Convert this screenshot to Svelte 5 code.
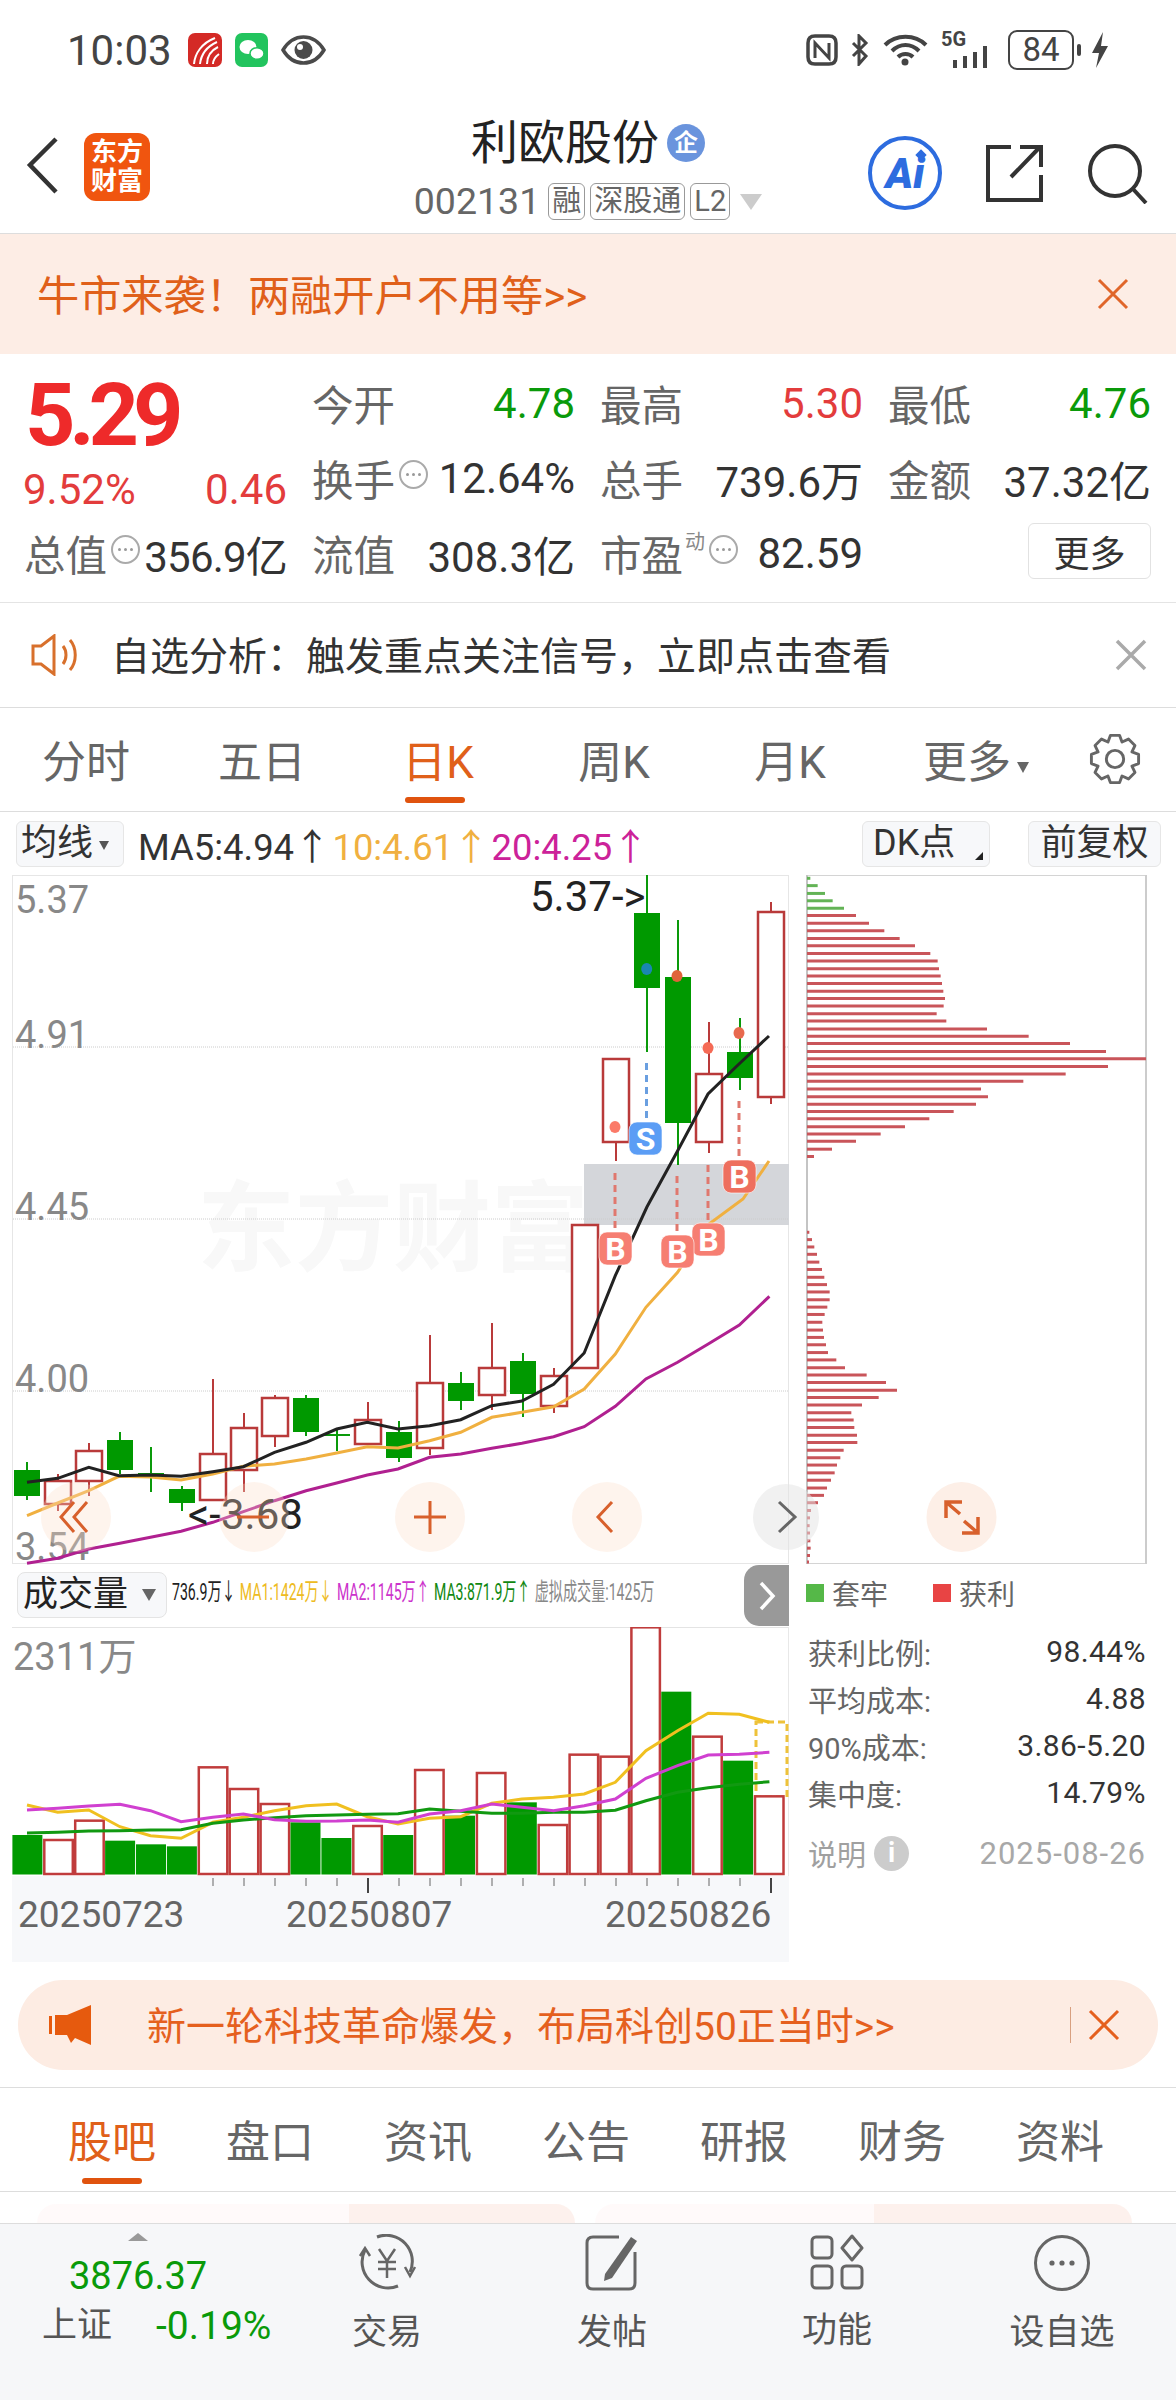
<script>
  const cx = (i) => 27 + 31 * i;
  const K = [
    ['g',1463,1471,1497,1501],['r',1475,1482,1505,1512],['r',1444,1452,1482,1497],['g',1433,1441,1471,1475],
    ['g',1448,1475,1475,1493],['g',1487,1490,1504,1512],['r',1380,1455,1501,1501],['r',1414,1429,1471,1493],
    ['r',1396,1399,1437,1448],['g',1396,1399,1433,1437],['g',1430,1436,1436,1452],['r',1403,1421,1445,1445],
    ['g',1422,1433,1459,1463],['r',1336,1384,1449,1456],['g',1373,1384,1402,1411],['r',1324,1369,1396,1411],
    ['g',1354,1362,1395,1418],['r',1369,1377,1407,1414],['r',1226,1226,1369,1369],['r',1060,1060,1143,1162],
    ['g',876,914,989,1053],['g',921,978,1124,1166],['r',1023,1075,1143,1154],['g',1019,1053,1079,1091],
    ['r',903,913,1098,1105]
  ];
  const toLine = (arr) => arr.map(([x, y]) => `${(x / 1.96).toFixed(1)},${(1200 + y / 3).toFixed(1)}`).join(' ');
  const ma5 = toLine([[53,850],[113,838],[174,805],[233,830],[295,828],[355,832],[417,818],[477,803],[538,760],[600,730],[660,690],[720,670],[780,690],[842,680],[903,662],[964,620],[1023,606],[1085,556],[1145,462],[1206,230],[1268,24]]) + ' 677,1153 708,1095 739,1065 769,1037';
  const ma10 = toLine([[53,950],[113,912],[174,875],[233,832],[295,834],[355,843],[417,825],[477,802],[538,795],[600,780],[660,762],[720,743],[780,747],[842,725],[903,700],[964,655],[1023,640],[1085,623],[1145,570],[1206,465],[1266,325],[1328,220]]) + ' 709,1225 743,1200 769,1162';
  const ma20 = toLine([[53,1093],[113,1078],[174,1050],[235,1033],[295,1015],[355,997],[417,970],[477,938],[538,905],[600,875],[660,852],[720,828],[780,810],[842,775],[903,765],[964,748],[1023,733],[1085,713],[1145,683],[1206,622],[1266,540],[1328,490],[1388,435],[1449,378],[1508,292]]);
  const V = [['g',828],['r',843],['r',785],['g',845],['g',856],['g',862],['r',625],['r',690],['r',735],['g',790],['g',837],['r',801],['g',828],['r',633],['g',770],['r',642],['g',730],['r',798],['r',587],['r',593],['r',205],['g',398],['r',533],['g',605],['r',712]];
  const vy = (z) => 1560 + z / 3;
  const vTop = V.map(([c, z], i) => ({ c, x: 12.4 + 30.9 * i, y: vy(z) }));
  const vx = [53,113,174,235,295,355,417,477,538,600,660,720,780,842,903,964,1023,1085,1145,1206,1266,1328,1388,1449,1508];
  const vLine = (ys) => ys.map((y, i) => `${(vx[i] / 1.96).toFixed(1)},${vy(y).toFixed(1)}`).join(' ');
  const m1 = vLine([738,760,753,803,830,838,790,775,755,740,735,773,795,778,773,733,720,715,705,670,575,515,463,466,490]);
  const m2 = vLine([753,748,741,736,755,788,775,765,782,787,786,783,790,765,755,735,745,755,740,720,658,620,588,586,580]);
  const m3 = vLine([822,820,816,815,813,812,793,783,776,770,768,766,764,750,757,763,763,760,760,754,725,700,686,676,668]);
  const chipsG = [[42,91],[58,113],[75,135],[91,158],[107,192]];
  const chipsR = [[123,228],[140,267],[156,313],[173,359],[189,405],[206,451],[222,473],[239,477],[255,482],[271,486],[288,490],[304,495],[320,491],[337,470],[353,499],[370,621],[386,746],[402,870],[419,978],[435,1098],[452,984],[468,857],[484,730],[501,603],[518,624],[534,588],[550,521],[566,448],[583,375],[599,302],[615,228],[632,156],[648,102],[813,88],[829,96],[845,103],[861,111],[878,118],[894,126],[911,133],[927,141],[943,149],[960,149],[976,142],[992,134],[1009,127],[1026,129],[1042,132],[1058,138],[1075,144],[1091,169],[1108,195],[1124,260],[1140,318],[1157,351],[1173,296],[1189,246],[1206,214],[1222,221],[1238,223],[1255,231],[1271,232],[1288,191],[1304,181],[1320,171],[1337,164],[1353,153],[1370,141],[1386,132],[1402,114],[1419,93],[1435,90],[1452,89],[1468,90],[1485,91],[1501,92],[1517,90],[1531,87]];
  const chipY = (z) => 860 + z / 2.178;
  const chipX = (v) => 780 + v / 3;
  const ticks = Array.from({ length: 18 }, (_, i) => 213 + 31 * i).filter((x) => x !== 368);
  const gear = (() => {
    let d = '';
    const n = 8, R = 25, r = 19;
    for (let k = 0; k < n; k++) {
      const a = (k * 360) / n - 90;
      const pts = [[-22.5, r], [-11, R], [11, R], [22.5, r]];
      pts.forEach(([da, rad], j) => {
        const t = ((a + da) * Math.PI) / 180;
        d += `${k === 0 && j === 0 ? 'M' : 'L'}${(rad * Math.cos(t)).toFixed(1)} ${(rad * Math.sin(t)).toFixed(1)} `;
      });
    }
    return d + 'Z';
  })();
  const quoteRows = [
    [['今开', '4.78', 'green'], ['最高', '5.30', 'red'], ['最低', '4.76', 'green']],
    [['换手', '12.64%', '', 'dots'], ['总手', '739.6万', ''], ['金额', '37.32亿', '']]
  ];
</script>

<div class="page">
  <div class="status">
    <div class="st-left">
      <span class="time">10:03</span>
      <svg class="sicon" width="34" height="34" viewBox="0 0 34 34"><rect width="34" height="34" rx="7" fill="#d42a26"/><path d="M6 31C7 20 14 10 27 5M12 31C13 22 18 14 29 9M19 31C19 24 22 18 30 14M25 31C25 27 27 24 31 21" stroke="#fff" stroke-width="2" fill="none"/></svg>
      <svg class="sicon" width="33" height="34" viewBox="0 0 33 34"><rect width="33" height="34" rx="7" fill="#22c45e"/><ellipse cx="13" cy="14" rx="8.500" ry="7" fill="#fff"/><ellipse cx="22" cy="20.500" rx="7" ry="5.800" fill="#fff" stroke="#22c45e" stroke-width="1.500"/></svg>
      <svg class="sicon" width="45" height="30" viewBox="0 0 45 30"><path d="M2 15C8 5 15 2 22.500 2S37 5 43 15C37 25 30 28 22.500 28S8 25 2 15Z" fill="none" stroke="#4a4a4a" stroke-width="3.500"/><circle cx="22.500" cy="15" r="9" fill="#4a4a4a"/><circle cx="19" cy="12" r="3" fill="#fff"/></svg>
    </div>
    <div class="st-right">
      <svg class="nfc" width="32" height="32" viewBox="0 0 32 32"><path d="M9 2H23Q30 2 30 9V23Q30 30 23 30H9Q2 30 2 23V9Q2 2 9 2Z" fill="none" stroke="#444" stroke-width="3.500"/><path d="M9 24V9L23 24V9" fill="none" stroke="#444" stroke-width="3"/></svg>
      <svg width="20" height="32" viewBox="0 0 20 32"><path d="M3 9L16 22L9 30V2L16 9L3 22" fill="none" stroke="#444" stroke-width="3"/></svg>
      <svg width="45" height="32" viewBox="0 0 45 32"><path d="M2 11C13 0 32 0 43 11M9 17C17 9 28 9 36 17M15 23C19 19 26 19 30 23" fill="none" stroke="#444" stroke-width="4"/><circle cx="22" cy="28" r="3.500" fill="#444"/></svg>
      <div class="sig"><span class="fg">5G</span><svg width="44" height="22" viewBox="0 0 44 22"><rect x="2" y="14" width="4" height="8" fill="#444"/><rect x="12" y="10" width="4" height="12" fill="#444"/><rect x="22" y="6" width="4" height="16" fill="#444"/><rect x="32" y="0" width="4" height="22" fill="#444"/></svg></div>
      <div class="batt">84</div>
      <svg class="bnub" width="4" height="12" viewBox="0 0 4 12"><rect width="4" height="12" rx="2" fill="#444"/></svg>
      <svg width="20" height="36" viewBox="0 0 20 36"><path d="M13 0L2 21H9L6 36L18 14H11Z" fill="#444"/></svg>
    </div>
  </div>

  <div class="nav">
    <svg class="back" width="36" height="60" viewBox="0 0 36 60"><path d="M32 4L6 30L32 57" fill="none" stroke="#333" stroke-width="4.500"/></svg>
    <div class="logo"><span>东方</span><span>财富</span></div>
    <div class="title">
      <div class="name">利欧股份<span class="qi">企</span></div>
      <div class="code">002131<span class="tg">融</span><span class="tg">深股通</span><span class="tg">L2</span><i class="tri"></i></div>
    </div>
    <div class="tools">
      <div class="ai"><b>Ai</b><i></i></div>
      <svg width="60" height="60" viewBox="0 0 60 60"><path d="M27 4H4V57H57V32M27 34L55 5M36 4H57V24" fill="none" stroke="#333" stroke-width="4"/></svg>
      <svg width="62" height="62" viewBox="0 0 62 62"><circle cx="29" cy="29" r="25" fill="none" stroke="#333" stroke-width="4"/><path d="M47 47L60 61" stroke="#333" stroke-width="4"/></svg>
    </div>
  </div>

  <div class="banner">
    <span class="up2">牛市来袭！两融开户不用等&gt;&gt;</span>
    <svg width="34" height="34" viewBox="0 0 34 34"><path d="M3 3L31 31M31 3L3 31" stroke="#e0662a" stroke-width="3"/></svg>
  </div>

  <div class="quote">
    <div class="q-price">
      <div class="price">5.29</div>
      <div class="chg"><span>9.52%</span><span>0.46</span></div>
    </div>
    {#each quoteRows as row, r}
      {#each row as c, i}
        <div class="cell" style="grid-row:{r + 1};grid-column:{i + 2}">
          <span class="lb">{c[0]}</span>
          {#if c[3]}<svg class="dots" width="31" height="31" viewBox="0 0 31 31"><circle cx="15.500" cy="15.500" r="13.500" fill="none" stroke="#aaa" stroke-width="2"/><circle cx="9.500" cy="15.500" r="1.500" fill="#999"/><circle cx="15.500" cy="15.500" r="1.500" fill="#999"/><circle cx="21.500" cy="15.500" r="1.500" fill="#999"/></svg>{/if}
          <span class="val {c[2]}">{c[1]}</span>
        </div>
      {/each}
    {/each}
    <div class="cell" style="grid-row:3;grid-column:1">
      <span class="lb">总值</span>
      <svg class="dots" width="31" height="31" viewBox="0 0 31 31"><circle cx="15.500" cy="15.500" r="13.500" fill="none" stroke="#aaa" stroke-width="2"/><circle cx="9.500" cy="15.500" r="1.500" fill="#999"/><circle cx="15.500" cy="15.500" r="1.500" fill="#999"/><circle cx="21.500" cy="15.500" r="1.500" fill="#999"/></svg>
      <span class="val tight">356.9亿</span>
    </div>
    <div class="cell" style="grid-row:3;grid-column:2"><span class="lb">流值</span><span class="val">308.3亿</span></div>
    <div class="cell" style="grid-row:3;grid-column:3">
      <span class="lb">市盈</span><sup class="dong">动</sup>
      <svg class="dots" width="31" height="31" viewBox="0 0 31 31"><circle cx="15.500" cy="15.500" r="13.500" fill="none" stroke="#aaa" stroke-width="2"/><circle cx="9.500" cy="15.500" r="1.500" fill="#999"/><circle cx="15.500" cy="15.500" r="1.500" fill="#999"/><circle cx="21.500" cy="15.500" r="1.500" fill="#999"/></svg>
      <span class="val">82.59</span>
    </div>
    <div class="cell end" style="grid-row:3;grid-column:4"><button class="more">更多</button></div>
  </div>

  <div class="notice">
    <svg width="50" height="42" viewBox="0 0 50 42"><path d="M3 12H11L24 2V40L11 30H3Z M33 12C37 17 37 25 33 30 M40 6C47 14 47 28 40 36" fill="none" stroke="#d8702c" stroke-width="3"/></svg>
    <span class="n-text up2">自选分析：触发重点关注信号，立即点击查看</span>
    <svg class="n-x" width="32" height="32" viewBox="0 0 32 32"><path d="M2 2L30 30M30 2L2 30" stroke="#aaa" stroke-width="3.500"/></svg>
  </div>

  <div class="tabs">
    <span>分时</span><span>五日</span>
    <span class="on">日K<i></i></span>
    <span>周K</span><span>月K</span>
    <span class="tmore">更多<b></b></span>
    <svg width="52" height="54" viewBox="-27 -27 54 54"><path d={gear} fill="none" stroke="#666" stroke-width="3" stroke-linejoin="round"/><circle r="9" fill="none" stroke="#666" stroke-width="3"/></svg>
  </div>

  <div class="toolbar">
    <span class="box b1">均线<b></b></span>
    <span class="mas"><span class="c1">MA5:4.94↑</span><span class="c2">10:4.61↑</span><span class="c3">20:4.25↑</span></span>
    <span class="box b2">DK点<b></b></span>
    <span class="box b3">前复权</span>
  </div>

  <div class="body">
    <div class="left">
      <svg class="kchart" width="777" height="689" viewBox="12 876 777 689">
        <rect x="12.500" y="876.500" width="776" height="688" fill="#fff" stroke="#e6e6e6"/>
        <text x="197" y="1264" class="wm">东方财富</text>
        <rect x="584" y="1165" width="205" height="61" fill="#d4d6da"/>
        {#each [1048, 1220, 1392] as y}
          <line x1="13" x2="788" y1={y} y2={y} stroke="#ccc" stroke-dasharray="1 1"/>
        {/each}
        <text x="15" y="914" class="ax">5.37</text>
        <text x="15" y="1049" class="ax">4.91</text>
        <text x="15" y="1221" class="ax">4.45</text>
        <text x="15" y="1393" class="ax">4.00</text>
        <text x="15" y="1561" class="ax">3.54</text>
        {#each [[646.500,1064,1120,'#6a9fe0'],[615,1174,1232,'#e0786e'],[677,1177,1233,'#e0786e'],[708,1166,1222,'#e0786e'],[739,1102,1158,'#e0786e']] as [x,a,b,col]}
          <line x1={x} x2={x} y1={a} y2={b} stroke={col} stroke-width="3" stroke-dasharray="7 5"/>
        {/each}
        {#each K as [c, hi, top, bot, lo], i}
          {#if c === 'g'}
            <line x1={cx(i)} x2={cx(i)} y1={hi} y2={lo} stroke="#0a9a0a" stroke-width="2"/>
            {#if bot - top < 2}
              <line x1={cx(i) - 13} x2={cx(i) + 13} y1={top} y2={top} stroke="#0a9a0a" stroke-width="2"/>
            {:else}
              <rect x={cx(i) - 13} y={top} width="26" height={bot - top} fill="#009900"/>
            {/if}
          {:else}
            <line x1={cx(i)} x2={cx(i)} y1={hi} y2={lo} stroke="#b93a3a" stroke-width="2"/>
            <rect x={cx(i) - 13} y={top} width="26" height={bot - top} fill="#fff" stroke="#b93a3a" stroke-width="2.500"/>
          {/if}
        {/each}
        <ellipse cx="615" cy="1128" rx="5.500" ry="6" fill="#fb7a68"/>
        <ellipse cx="646.700" cy="970" rx="5.500" ry="6" fill="#1a86b0"/>
        <ellipse cx="677" cy="977" rx="5.500" ry="6" fill="#e0633a"/>
        <ellipse cx="708" cy="1049" rx="5.500" ry="6" fill="#f56a55"/>
        <ellipse cx="739" cy="1034" rx="5.500" ry="6" fill="#e8694e"/>
        <polyline points={ma20} class="ln" stroke="#b02090"/>
        <polyline points={ma10} class="ln" stroke="#f0b040"/>
        <polyline points={ma5} class="ln" stroke="#222"/>
        {#each [[629,1123,'#5b9df5','S'],[723,1161,'#ee6f5e','B'],[692,1224,'#f67e72','B'],[599,1233,'#f67e72','B'],[661,1236,'#f67e72','B']] as [x,y,col,t]}
          <rect x={x} y={y} width="33" height="33" rx="8" fill={col} stroke="#fff" stroke-opacity=".6"/>
          <text x={x + 16.500} y={y + 28} class="sig-t">{t}</text>
        {/each}
        <text x="530" y="912" class="pk">5.37-&gt;</text>
        <text x="188" y="1530" class="pk">&lt;-3.68</text>
        {#each [76, 254, 430, 607] as x}
          <circle cx={x} cy="1518" r="35" fill="#fbdcc8" fill-opacity=".32"/>
        {/each}
        <circle cx="786" cy="1518" r="33" fill="#e4e4e4" fill-opacity=".5"/>
        <path d="M74 1503L61 1518L74 1533M87 1503L74 1518L87 1533" fill="none" stroke="#d8602c" stroke-width="3"/>
        <path d="M237 1518H269" stroke="#d8602c" stroke-width="3"/>
        <path d="M414 1518H446M430 1502V1535" stroke="#d8602c" stroke-width="3"/>
        <path d="M612 1503L598 1518L612 1533" fill="none" stroke="#d8602c" stroke-width="3"/>
        <path d="M779 1503L795 1518L779 1533" fill="none" stroke="#666" stroke-width="3"/>
      </svg>

      <div class="volhead">
        <span class="vbox">成交量<b></b></span>
        <span class="vtxt"><span class="t0">736.9万↓</span><span class="t1">MA1:1424万↓</span><span class="t2">MA2:1145万↑</span><span class="t3">MA3:871.9万↑</span><span class="t4">虚拟成交量:1425万</span></span>
        <span class="vtab"><svg width="18" height="30" viewBox="0 0 18 30"><path d="M3 2L15 15L3 28" fill="none" stroke="#fff" stroke-width="3.500"/></svg></span>
      </div>

      <svg class="vchart" width="777" height="335" viewBox="12 1628 777 335">
        <rect x="12" y="1628" width="777" height="249" fill="#fff"/>
        <line x1="12" x2="789" y1="1628.500" y2="1628.500" stroke="#e4e4e4"/>
        <line x1="788.500" x2="788.500" y1="1628" y2="1877" stroke="#e8e8e8"/>
        <rect x="12" y="1877" width="777" height="86" fill="#f7f8fa"/>
        <text x="13" y="1671" class="ax">2311万</text>
        <rect x="756" y="1723" width="31" height="75" fill="none" stroke="#eec23a" stroke-width="3" stroke-dasharray="7 4"/>
        {#each vTop as b}
          {#if b.c === 'g'}
            <rect x={b.x} y={b.y} width="30" height={1875.500 - b.y} fill="#009900"/>
          {:else}
            <rect x={b.x + 1} y={b.y} width="28.500" height={1875 - b.y} fill="#fff" stroke="#c03c3c" stroke-width="2.500"/>
          {/if}
        {/each}
        <polyline points={m1} class="ln2" stroke="#f0c020"/>
        <polyline points={m3} class="ln2" stroke="#119911"/>
        <polyline points={m2} class="ln2" stroke="#d040d0"/>
        {#each ticks as x}
          <line x1={x} x2={x} y1="1879" y2="1887" stroke="#666"/>
        {/each}
        <line x1="368" x2="368" y1="1879" y2="1894" stroke="#444" stroke-width="2"/>
        <line x1="771" x2="771" y1="1879" y2="1894" stroke="#444" stroke-width="2"/>
        <text x="18" y="1928" class="dt">20250723</text>
        <text x="286" y="1928" class="dt">20250807</text>
        <text x="605" y="1928" class="dt">20250826</text>
      </svg>
    </div>

    <div class="right">
      <svg class="chip" width="342" height="689" viewBox="806 876 342 689">
        <rect x="806.500" y="876.500" width="339" height="688" fill="#fff" stroke="#d4d4d4"/>
        <line x1="1146" x2="1146" y1="876" y2="1565" stroke="#ccc" stroke-width="2"/>
        <line x1="807" x2="807" y1="876" y2="1565" stroke="#c4c4c4" stroke-width="2"/>
        {#each chipsG as [z, v]}
          <line x1="807" x2={chipX(v)} y1={chipY(z)} y2={chipY(z)} stroke="#63b356" stroke-width="3"/>
        {/each}
        {#each chipsR as [z, v]}
          <line x1="807" x2={chipX(v)} y1={chipY(z)} y2={chipY(z)} stroke="#c9555a" stroke-width="3"/>
        {/each}
        <circle cx="961.500" cy="1518" r="35" fill="#fdefe7"/>
        <path d="M946 1519V1503H962M946 1503L960 1515M978 1518V1534H962M978 1534L964 1522" fill="none" stroke="#d8602c" stroke-width="3.500"/>
      </svg>
      <div class="legend">
        <i class="sq g"></i><span>套牢</span><i class="sq r"></i><span>获利</span>
      </div>
      <dl class="stats">
        <dt>获利比例:</dt><dd>98.44%</dd>
        <dt>平均成本:</dt><dd>4.88</dd>
        <dt>90%成本:</dt><dd>3.86-5.20</dd>
        <dt>集中度:</dt><dd>14.79%</dd>
      </dl>
      <div class="foot">
        <span>说明</span><span class="info">i</span><span class="date">2025-08-26</span>
      </div>
    </div>
  </div>

  <div class="promo">
    <svg width="46" height="40" viewBox="0 0 46 40"><path d="M2 11H5V29H2ZM8 10H20L44 0V40L28 33L24 38L20 30H8Z" fill="#e65a0e"/></svg>
    <span class="p-text up2">新一轮科技革命爆发，布局科创50正当时&gt;&gt;</span>
    <i class="sep"></i>
    <svg width="32" height="32" viewBox="0 0 32 32"><path d="M2 2L30 30M30 2L2 30" stroke="#e5601e" stroke-width="3"/></svg>
  </div>

  <div class="tabs2">
    <span class="on">股吧<i></i></span><span>盘口</span><span>资讯</span><span>公告</span><span>研报</span><span>财务</span><span>资料</span>
  </div>

  <div class="peek"><div class="pk1"></div><div class="pk2"></div></div>

  <div class="bottom">
    <div class="idx">
      <i class="up"></i>
      <div class="ival">3876.37</div>
      <div class="irow"><span class="iname">上证</span><span class="ipct">-0.19%</span></div>
    </div>
    <div class="bi">
      <svg width="70" height="58" viewBox="0 0 70 58"><path d="M25 3A26 26 0 0 1 58 38M46 52A26 26 0 0 1 13 16" fill="none" stroke="#666" stroke-width="3"/><path d="M8 22L13 14L18 22M63 33L58 42L53 33" fill="none" stroke="#666" stroke-width="2.500"/><path d="M27 15L35 27L43 15M35 27V44M26 28H44M26 35H44" fill="none" stroke="#666" stroke-width="2.500"/></svg>
      <span>交易</span>
    </div>
    <div class="bi">
      <svg width="58" height="58" viewBox="0 0 58 58"><path d="M36 3H10Q4 3 4 9V49Q4 55 10 55H46Q52 55 52 49V18" fill="none" stroke="#666" stroke-width="3"/><path d="M22 40L48 3L54 7L29 44L21 47Z" fill="#666"/></svg>
      <span>发帖</span>
    </div>
    <div class="bi">
      <svg width="56" height="56" viewBox="0 0 56 56"><rect x="3" y="3" width="20" height="21" rx="4" fill="none" stroke="#666" stroke-width="3"/><rect x="3" y="32" width="20" height="22" rx="4" fill="none" stroke="#666" stroke-width="3"/><rect x="33" y="32" width="20" height="22" rx="4" fill="none" stroke="#666" stroke-width="3"/><path d="M43 2L53 14L43 26L33 14Z" fill="none" stroke="#666" stroke-width="3" stroke-linejoin="round"/></svg>
      <span>功能</span>
    </div>
    <div class="bi">
      <svg width="58" height="58" viewBox="0 0 58 58"><circle cx="29" cy="29" r="26.500" fill="none" stroke="#666" stroke-width="3"/><circle cx="19" cy="29" r="2.600" fill="#666"/><circle cx="29" cy="29" r="2.600" fill="#666"/><circle cx="39" cy="29" r="2.600" fill="#666"/></svg>
      <span>设自选</span>
    </div>
  </div>
</div>

<style>
  :global(body) { margin: 0; background: #fff; }
  .page { width: 1176px; height: 2400px; overflow: hidden; font-family: Roboto, "Noto Sans CJK SC", sans-serif; color: #333; background: #fff; }
  svg { display: block; flex: none; }
  .up2 { position: relative; top: -2px; }

  .status { height: 100px; display: flex; justify-content: space-between; align-items: center; padding: 0 66px 0 67px; }
  .st-left, .st-right { display: flex; align-items: center; }
  .st-left { gap: 13px; }
  .time { font-size: 42px; color: #444; width: 108px; }
  .st-right { gap: 13px; }
  .nfc { margin-right: -1px; }
  .sig { position: relative; width: 54px; height: 36px; }
  .fg { position: absolute; left: 0; top: -5px; font-size: 20px; font-weight: 700; color: #444; }
  .sig svg { position: absolute; right: 0; bottom: 0; }
  .batt { width: 62px; height: 36px; border: 2.5px solid #444; border-radius: 9px; font-size: 33px; line-height: 36px; text-align: center; color: #444; margin-right: -10px; }
  .bnub { margin-right: -4px; }

  .nav { height: 133px; border-bottom: 1px solid #ddd; position: relative; display: flex; align-items: center; padding: 0 30px 0 24px; box-sizing: content-box; }
  .back { margin-top: -4px; }
  .logo { width: 66px; height: 68px; border-radius: 12px; background: #f0550f; margin-left: 24px; color: #fff; font-weight: 700; font-size: 26px; line-height: 29px; display: flex; flex-direction: column; align-items: center; justify-content: center; }
  .title { position: absolute; left: 0; right: 0; top: 15px; text-align: center; }
  .name { font-size: 47px; line-height: 56px; color: #222; }
  .qi { display: inline-block; width: 38px; height: 38px; line-height: 38px; border-radius: 50%; background: #6a94dd; color: #fff; font-size: 24px; font-weight: 700; vertical-align: 8px; margin-left: 8px; }
  .code { font-size: 37.5px; line-height: 40px; color: #666; margin-top: 10px; display: flex; justify-content: center; align-items: center; }
  .tg { font-size: 29px; line-height: 35px; border: 1.5px solid #999; border-radius: 6px; padding: 0 3px; margin-left: 5px; color: #666; }
  .code .tg:first-of-type { margin-left: 8px; }
  .tri { width: 0; height: 0; border-left: 11px solid transparent; border-right: 11px solid transparent; border-top: 16px solid #ccc; margin-left: 10px; margin-top: 2px; }
  .tools { position: absolute; left: 868px; top: 36px; display: flex; align-items: center; }
  .tools svg:nth-of-type(1) { margin-left: 42px; }
  .tools svg:nth-of-type(2) { margin-left: 42px; }
  .ai { width: 66px; height: 66px; border: 4.5px solid #2d6cdf; border-radius: 50%; display: flex; align-items: center; justify-content: center; color: #2d6cdf; position: relative; }
  .ai b { font-size: 42px; font-style: italic; font-weight: 900; }
  .ai i { position: absolute; right: 13px; top: 11px; width: 8px; height: 8px; background: #2d6cdf; transform: rotate(45deg); }

  .banner { height: 120px; background: #fdede5; display: flex; align-items: center; justify-content: space-between; padding: 0 46px 0 37px; font-size: 42.2px; color: #e0601a; }

  .quote { height: 249px; box-sizing: border-box; padding: 11px 26px 0 25px; border-bottom: 1px solid #e4e4e4; display: grid; grid-template-columns: repeat(4, 262px); column-gap: 26px; grid-template-rows: repeat(3, 75px); }
  .q-price { grid-row: 1 / span 2; grid-column: 1; position: relative; }
  .price { font-size: 88px; line-height: 88px; font-weight: 700; color: #ee2a2a; letter-spacing: -6.2px; margin-left: 0; margin-top: 6px; }
  .chg { display: flex; justify-content: space-between; font-size: 42px; line-height: 50px; color: #e33c3c; margin-top: 6px; margin-left: -2px; }
  .cell { display: flex; align-items: center; }
  .lb { font-size: 41.5px; color: #666; margin-left: -1px; }
  .val { font-size: 42px; color: #333; margin-left: auto; position: relative; top: 1px; }
  .val.tight { letter-spacing: -0.8px; }
  .val.green { color: #0a9a0a; }
  .val.red { color: #e33c3c; }
  .dots { margin-left: 3px; margin-top: -6px; }
  .dong { font-size: 20px; color: #888; line-height: 20px; margin: -22px 0 0 2px; }
  .end { justify-content: flex-end; }
  .more { width: 123px; height: 56px; border: 1px solid #e2e2e2; border-radius: 6px; background: #fff; font: inherit; font-size: 36px; color: #333; padding: 0; margin-top: -4px; }

  .notice { height: 104px; border-bottom: 1px solid #ddd; display: flex; align-items: center; padding: 0 29px 0 30px; }
  .n-text { font-size: 39px; margin-left: 31px; flex: 1; color: #333; }

  .tabs { height: 103px; border-bottom: 1px solid #ddd; display: grid; grid-template-columns: repeat(6, 176px) 1fr; align-items: center; justify-items: center; font-size: 44px; color: #666; margin-left: -2px; }
  .tabs span, .tabs2 span { position: relative; margin-top: -2px; }
  .tabs svg { margin-top: -2px; }
  .on { color: #e0601a !important; }
  .tabs .on i { position: absolute; left: 3px; width: 60px; top: 70px; height: 6px; background: #e0530e; border-radius: 3px; }
  .tmore { margin-left: 20px; }
  .tmore b { display: inline-block; border-left: 6px solid transparent; border-right: 6px solid transparent; border-top: 11px solid #666; margin-left: 6px; vertical-align: 5px; }

  .toolbar { height: 63px; position: relative; display: flex; align-items: center; font-size: 36px; padding-left: 16px; box-sizing: border-box; }
  .box { height: 46px; box-sizing: border-box; line-height: 43px; border: 1px solid #e6e6e6; border-radius: 6px; background: #f7f8fa; color: #333; position: relative; display: inline-block; }
  .b1 { width: 108px; padding-left: 4px; }
  .b1 b { display: inline-block; border-left: 5px solid transparent; border-right: 5px solid transparent; border-top: 9px solid #555; margin-left: 6px; vertical-align: 5px; }
  .mas { margin-left: 14px; display: flex; gap: 2px; flex: 1; font-size: 36.4px; }
  .c1 { color: #333; } .c2 { color: #f0b040; } .c3 { color: #cc2299; }
  .b2 { width: 128px; padding-left: 10px; margin-right: 38px; }
  .b2 b { position: absolute; right: 6px; bottom: 6px; border-left: 8px solid transparent; border-bottom: 8px solid #222; }
  .b3 { width: 133px; text-align: center; margin-right: 15px; }

  .body { display: flex; height: 1087px; }
  .left { margin-left: 12px; width: 777px; flex: none; }
  .kchart { position: relative; z-index: 1; overflow: visible; }
  .vchart { display: block; }
  .wm { font-size: 98px; font-weight: 700; fill: #f8f8f8; font-family: "Noto Sans CJK SC", sans-serif; }
  .ax { font-size: 38px; fill: #888; }
  .pk { font-size: 42px; fill: #222; }
  .sig-t { font-size: 32px; font-weight: 700; fill: #fff; text-anchor: middle; }
  .ln { fill: none; stroke-width: 3; }
  .ln2 { fill: none; stroke-width: 3; }
  .volhead { height: 63px; display: flex; align-items: center; position: relative; }
  .vbox { margin-left: 5px; width: 150px; height: 46px; box-sizing: border-box; border: 1px solid #e4e4e4; border-radius: 8px; background: #f7f8fa; font-size: 35px; line-height: 43px; padding-left: 5px; color: #222; margin-top: -1px; }
  .vbox b { display: inline-block; border-left: 7px solid transparent; border-right: 7px solid transparent; border-top: 12px solid #666; margin-left: 14px; vertical-align: 5px; }
  .vtxt { position: absolute; left: 160px; top: 14px; transform: scaleX(.6); transform-origin: left center; white-space: nowrap; font-size: 23.5px; line-height: 28px; display: flex; gap: 7px; }
  .t0 { color: #222; } .t1 { color: #eebb22; } .t2 { color: #cc33cc; } .t3 { color: #118811; } .t4 { color: #888; }
  .vtab { position: absolute; right: 0; top: 1px; width: 45px; height: 61px; background: #999; border-radius: 15px 0 0 15px; display: flex; align-items: center; justify-content: center; }
  .vchart text.dt { font-size: 37px; fill: #666; }

  .right { margin-left: 17px; width: 342px; flex: none; }
  .legend { display: flex; align-items: center; height: 58px; font-size: 28px; color: #666; margin-left: -1px; padding-left: 1px; }
  .sq { width: 18px; height: 18px; display: block; margin-right: 8px; }
  .sq.g { background: #55b848; }
  .sq.r { background: #e84444; margin-left: 45px; }
  .stats { margin: 6px 2px 0 2px; display: grid; grid-template-columns: auto 1fr; grid-auto-rows: 47px; align-items: center; }
  dt { font-size: 29px; color: #666; }
  dd { margin: 0; font-size: 30px; letter-spacing: .4px; color: #333; text-align: right; }
  .foot { display: flex; align-items: center; margin: 15px 2px 0 2px; font-size: 29px; color: #a0a0a0; height: 44px; }
  .info { width: 35px; height: 35px; border-radius: 50%; background: #ccc; color: #fff; font-size: 27px; font-weight: 700; line-height: 35px; text-align: center; margin-left: 8px; }
  .date { margin-left: auto; font-size: 31px; letter-spacing: 1px; color: #a8a8a8; }

  .promo { margin: 18px 18px 0 18px; height: 90px; border-radius: 45px; background: #fdece3; display: flex; align-items: center; padding: 0 38px 0 29px; }
  .p-text { margin-left: 54px; font-size: 39px; color: #e5601e; flex: 1; }
  .sep { width: 1px; height: 36px; background: #d8a080; margin-right: 17px; }
  .tabs2 { margin-top: 17px; height: 103px; border-top: 1px solid #ddd; border-bottom: 1px solid #ddd; display: grid; grid-template-columns: repeat(7, 158px); padding-left: 33px; align-items: center; justify-items: center; font-size: 44px; color: #666; }
  .tabs2 .on i { position: absolute; left: 14px; width: 60px; top: 71px; height: 6px; background: #e0530e; border-radius: 3px; }
  .peek { height: 31px; padding: 12px 44px 0 37px; box-sizing: border-box; display: flex; gap: 20px; }
  .peek div { flex: 1; border-radius: 24px 24px 0 0; }
  .pk1 { background: linear-gradient(90deg, #fffafa 58%, #fdf1ed 58%); }
  .pk2 { background: linear-gradient(90deg, #fffafa 52%, #fdf1ed 52%); }
  .bottom { height: 176px; background: #f6f7f9; border-top: 1px solid #ddd; display: grid; grid-template-columns: 274.5px repeat(4, 225px); }
  .idx { position: relative; padding-left: 42px; }
  .up { position: absolute; left: 128px; top: 9px; border-left: 10px solid transparent; border-right: 10px solid transparent; border-bottom: 8px solid #999; }
  .ival { position: absolute; left: 69px; top: 28px; font-size: 38px; line-height: 48px; color: #0a9a0a; }
  .irow { position: absolute; left: 42px; top: 78px; display: flex; align-items: center; line-height: 48px; }
  .iname { font-size: 35px; color: #555; }
  .ipct { font-size: 39px; color: #0a9a0a; margin-left: 44px; }
  .bi { display: flex; flex-direction: column; align-items: center; padding-top: 10px; }
  .bi span { font-size: 35px; color: #555; margin-top: 16px; line-height: 50px; }
</style>
